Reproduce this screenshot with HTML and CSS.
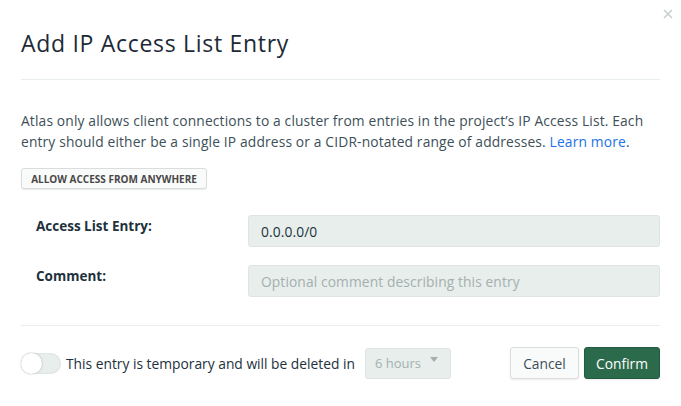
FILE: index.html
```html
<!DOCTYPE html>
<html lang="en">
<head>
  <meta charset="UTF-8">
  <title>Add IP Access List Entry</title>
  <link rel="stylesheet" href="styles.css">
</head>
<body>
  <div class="modal">
    <button class="close" aria-label="Close">
      <svg width="10" height="10" viewBox="0 0 10 10"><path d="M1 1L9 9M9 1L1 9" stroke="#c9cfcf" stroke-width="1.6"/></svg>
    </button>
    <h1>Add IP Access List Entry</h1>
    <hr>
    <p class="intro">Atlas only allows client connections to a cluster from entries in the project’s IP Access List. Each entry should either be a single IP address or a CIDR-notated range of addresses. <a href="#">Learn more</a>.</p>
    <button class="small-btn">ALLOW ACCESS FROM ANYWHERE</button>
    <div class="form">
      <div class="row">
        <label for="entry">Access List Entry:</label>
        <input id="entry" type="text" value="0.0.0.0/0">
      </div>
      <div class="row">
        <label for="comment">Comment:</label>
        <input id="comment" type="text" placeholder="Optional comment describing this entry">
      </div>
    </div>
    <hr>
    <div class="footer">
      <div class="temp">
        <span class="toggle"><span class="knob"></span></span>
        <span>This entry is temporary and will be deleted in</span>
        <span class="select">6 hours <span class="caret"></span></span>
      </div>
      <div class="actions">
        <button class="btn">Cancel</button>
        <button class="btn primary">Confirm</button>
      </div>
    </div>
  </div>
</body>
</html>
```

FILE: styles.css
```css
body {
  margin: 0;
  background: #fff;
  font-family: 'Open Sans', 'Liberation Sans', sans-serif;
  color: #21313c;
}
.modal {
  position: relative;
  padding: 23px 21px 20px 21px;
}
.close {
  position: absolute;
  top: 7px;
  right: 8px;
  border: none;
  background: none;
  padding: 0;
  width: 10px;
  height: 10px;
}
h1 {
  margin: 0;
  font-size: 23px;
  font-weight: 400;
  line-height: 40px;
  letter-spacing: 0.7px;
  color: #1b2a36;
}
hr {
  border: none;
  border-top: 1px solid #e7eeec;
  margin: 16px 0 0;
}
.intro {
  margin: 30px 0 16px;
  font-size: 13.8px;
  line-height: 21px;
  letter-spacing: 0.15px;
  color: #3d4f58;
}
.intro a {
  color: #1a73e8;
  text-decoration: none;
}
.small-btn {
  font-family: inherit;
  font-size: 10px;
  font-weight: 700;
  color: #494747;
  background: #f9fbfa;
  border: 1px solid #dcdcdc;
  border-radius: 3px;
  box-shadow: 0 1px 1px rgba(0,0,0,0.08);
  height: 21px;
  width: 186px;
  padding: 0;
  display: block;
}
.form {
  padding: 26px 0 12px 15px;
  display: flex;
  flex-direction: column;
  gap: 18px;
}
.row {
  display: flex;
  align-items: flex-start;
}
.row label {
  width: 212px;
  font-size: 13.5px;
  font-weight: 700;
  line-height: 22px;
  color: #21313c;
}
.row input {
  flex: 1;
  height: 32px;
  box-sizing: border-box;
  background: #e7eeec;
  border: 1px solid #dde4e2;
  border-radius: 3px;
  padding: 0 12px;
  font-family: inherit;
  font-size: 13.8px;
  letter-spacing: 0.1px;
  color: #21313c;
}
.row input::placeholder {
  color: #a5b0ae;
}
.footer {
  display: flex;
  justify-content: space-between;
  align-items: center;
  padding-top: 21px;
}
.temp {
  display: flex;
  align-items: center;
  font-size: 13.8px;
  color: #21313c;
}
.toggle {
  width: 40px;
  height: 21px;
  border-radius: 11px;
  background: #e7eeec;
  box-shadow: inset 0 0 2px rgba(0,0,0,0.12);
  margin-right: 5px;
  display: flex;
  align-items: center;
}
.knob {
  width: 21px;
  height: 21px;
  border-radius: 50%;
  background: #fff;
  box-shadow: 0 0 2px rgba(0,0,0,0.3);
}
.select {
  margin-left: 10px;
  width: 86px;
  height: 31px;
  box-sizing: border-box;
  border: 1px solid #dde4e2;
  border-radius: 3px;
  background: #e7eeec;
  color: #a5b0ae;
  font-size: 13px;
  padding-left: 9px;
  display: flex;
  align-items: center;
  position: relative;
}
.caret {
  position: absolute;
  right: 12px;
  top: 8px;
  border-left: 4px solid transparent;
  border-right: 4px solid transparent;
  border-top: 5px solid #a5b0ae;
}
.actions {
  display: flex;
  gap: 5px;
}
.btn {
  height: 32px;
  padding: 0;
  width: 69px;
  font-family: inherit;
  font-size: 13.8px;
  color: #3d4f58;
  background: #f9fbfa;
  border: 1px solid #dcdcdc;
  border-radius: 3px;
  box-shadow: 0 1px 2px rgba(0,0,0,0.08);
}
.btn.primary {
  width: 76px;
  background: #2b6b4c;
  border-color: #245c41;
  color: #fff;
}
```
